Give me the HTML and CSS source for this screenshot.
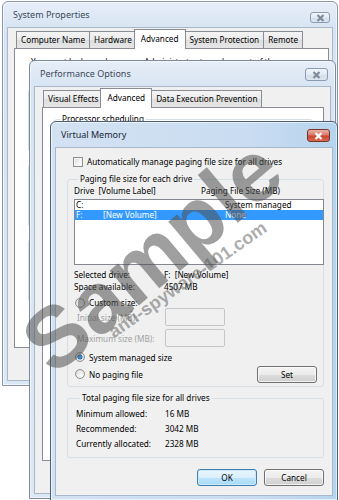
FILE: index.html
```html
<!DOCTYPE html>
<html lang="en">

<head>
    <meta charset="UTF-8">
    <meta name="viewport" content="width=device-width, initial-scale=1.0">
    <title>Virtual Memory</title>
    <link rel="stylesheet" href="styles.css">
</head>

<body>
    <div class="desktop">

        <!-- System Properties (inactive) -->
        <div class="window win-sys">
            <div class="titlebar">
                <span class="title">System Properties</span>
                <span class="close close-small">
                    <svg width="9" height="8" viewBox="0 0 9 8"><path d="M1.5 1 L7.5 7 M7.5 1 L1.5 7" /></svg>
                </span>
            </div>
            <div class="client">
                <div class="tabs">
                    <span class="tab">Computer Name</span>
                    <span class="tab">Hardware</span>
                    <span class="tab active">Advanced</span>
                    <span class="tab">System Protection</span>
                    <span class="tab">Remote</span>
                </div>
                <div class="panel panel-sys">
                    <p class="note">You must be logged on as an Administrator to make most of these changes.</p>
                    <div class="group group-sys"></div>
                    <div class="group group-sys"></div>
                    <div class="group group-sys"></div>
                </div>
            </div>
        </div>

        <!-- Performance Options (inactive) -->
        <div class="window win-perf">
            <div class="titlebar">
                <span class="title">Performance Options</span>
                <span class="close">
                    <svg width="9" height="8" viewBox="0 0 9 8"><path d="M1.5 1 L7.5 7 M7.5 1 L1.5 7" /></svg>
                </span>
            </div>
            <div class="client">
                <div class="tabs">
                    <span class="tab">Visual Effects</span>
                    <span class="tab active">Advanced</span>
                    <span class="tab">Data Execution Prevention</span>
                </div>
                <div class="panel panel-perf">
                    <fieldset class="group group-perf"><legend>Processor scheduling</legend></fieldset>
                </div>
            </div>
        </div>

        <!-- Virtual Memory (active) -->
        <div class="window win-vm">
            <div class="titlebar">
                <span class="title">Virtual Memory</span>
                <span class="close close-red">
                    <svg width="9" height="8" viewBox="0 0 9 8"><path d="M1.5 1 L7.5 7 M7.5 1 L1.5 7" /></svg>
                </span>
            </div>
            <div class="client client-vm">
                <label class="check-row">
                    <span class="checkbox"></span>
                    Automatically manage paging file size for all drives
                </label>

                <fieldset class="group group-drives">
                    <legend>Paging file size for each drive</legend>
                    <div class="list-head">
                        <span>Drive&nbsp; [Volume Label]</span>
                        <span>Paging File Size (MB)</span>
                    </div>
                    <div class="listbox">
                        <div class="list-row">
                            <span>C:</span><span></span><span>System managed</span>
                        </div>
                        <div class="list-row selected">
                            <span>F:</span><span>[New Volume]</span><span>None</span>
                        </div>
                    </div>

                    <div class="info">
                        <span>Selected drive:</span><span>F:&nbsp; [New Volume]</span>
                        <span>Space available:</span><span>4507 MB</span>
                    </div>

                    <label class="radio-row radio-custom"><span class="radio"></span>Custom size:</label>
                    <div class="size-row">
                        <span class="size-label">Initial size (MB):</span>
                        <span class="input"></span>
                    </div>
                    <div class="size-row size-max">
                        <span class="size-label">Maximum size (MB):</span>
                        <span class="input"></span>
                    </div>

                    <div class="set-row">
                        <div class="radios">
                            <label class="radio-row"><span class="radio checked"></span>System managed size</label>
                            <label class="radio-row"><span class="radio"></span>No paging file</label>
                        </div>
                        <button class="btn btn-set">Set</button>
                    </div>
                </fieldset>

                <fieldset class="group group-total">
                    <legend>Total paging file size for all drives</legend>
                    <div class="totals">
                        <span>Minimum allowed:</span><span>16 MB</span>
                        <span>Recommended:</span><span>3042 MB</span>
                        <span>Currently allocated:</span><span>2328 MB</span>
                    </div>
                </fieldset>

                <div class="buttons">
                    <button class="btn btn-default">OK</button>
                    <button class="btn">Cancel</button>
                </div>
            </div>
        </div>

        <!-- Watermark -->
        <div class="mark mark-big">Sample</div>
        <div class="mark mark-small">anti-spyware-101.com</div>
    </div>
</body>

</html>
```

FILE: styles.css
```css
* {
    margin: 0;
    padding: 0;
    box-sizing: border-box;
}

body {
    font-family: "Segoe UI", "Noto Sans", Roboto, sans-serif;
    font-size: 8.2px;
    color: #000;
    background: #fff;
    width: 339px;
    height: 500px;
    overflow: hidden;
}

.desktop {
    position: relative;
    width: 339px;
    height: 500px;
    overflow: hidden;
}

/* Windows */
.window {
    position: absolute;
    display: flex;
    flex-direction: column;
    border: 1px solid #8896a8;
    border-radius: 6px 6px 0 0;
    padding: 0 4px 4px 4px;
    background: linear-gradient(180deg, #e6eef8 0%, #d6e3f2 30px, #dce7f4 100%);
    box-shadow: 0 0 0 1px rgba(255, 255, 255, 0.6) inset;
}

.win-sys {
    left: 2px;
    top: 1px;
    width: 336px;
    height: 385px;
}

.win-perf {
    left: 29px;
    top: 60px;
    width: 307px;
    height: 439px;
    border-color: #7c899b;
}

.win-vm {
    left: 50px;
    top: 121px;
    width: 288px;
    height: 380px;
    border-color: #4d5d72;
    background: linear-gradient(90deg, #d3e2f3 0%, #c9dcf1 70%, #b5d4ee 100%);
}

.titlebar {
    height: 25px;
    display: flex;
    align-items: flex-start;
    justify-content: space-between;
    padding: 0 3px 0 6px;
}

.title {
    margin-top: 7px;
    line-height: 12px;
    font-size: 9px;
    color: #3c4858;
}

.win-vm .title {
    color: #1b2633;
}

.close {
    margin-top: 7px;
    width: 23px;
    height: 13px;
    border: 1px solid #8d9bae;
    border-radius: 3px;
    background: linear-gradient(180deg, #f1f5fa 0%, #e2eaf3 50%, #d3dee9 51%, #dce6f0 100%);
    display: flex;
    align-items: center;
    justify-content: center;
}

.close svg path {
    stroke: #7f8b9a;
    stroke-width: 2.2;
    fill: none;
}

.close-small {
    margin-top: 10px;
    width: 20px;
    height: 11px;
}

.close-red {
    border-color: #7a3326;
    background: linear-gradient(180deg, #eab2a4 0%, #d9796a 45%, #c7452f 55%, #d96a50 100%);
}

.close-red svg path {
    stroke: #fff;
}

/* Client area */
.client {
    flex: 1;
    background: #f0f0f0;
    border: 1px solid #a8b8cb;
    display: flex;
    flex-direction: column;
}

.win-sys .client {
    padding: 1px 3px 32px 6px;
}

.win-perf .client {
    padding: 1px 6px 32px 7px;
}

/* Tabs */
.tabs {
    display: flex;
    align-items: flex-end;
    height: 19px;
    padding-left: 2px;
    position: relative;
    z-index: 1;
}

.win-perf .tabs {
    padding-left: 1px;
}

.tab {
    height: 17px;
    line-height: 16px;
    padding: 0 4px;
    border: 1px solid #898c95;
    border-bottom: none;
    margin-right: -1px;
    background: linear-gradient(180deg, #f4f4f4 0%, #ebebeb 50%, #dedede 51%, #e6e6e6 100%);
    white-space: nowrap;
}

.tab.active {
    height: 20px;
    line-height: 18px;
    margin: 0 -1px -1px -2px;
    padding: 0 6px;
    background: #fff;
    position: relative;
    z-index: 2;
}

.panel {
    flex: 1;
    background: #fff;
    border: 1px solid #898c95;
}

.panel-sys {
    padding: 8px 10px 0 13px;
}

.note {
    margin-left: 3px;
    line-height: 10px;
}

.panel-perf {
    padding: 5px 10px 0 11px;
}

/* Group boxes */
.group {
    border: 1px solid #d5dfe5;
    border-radius: 3px;
    min-width: 0;
}

.group legend {
    padding: 0 2px;
    margin-left: 5px;
    line-height: 12px;
}

.group-sys {
    height: 63px;
    margin-top: 12px;
}

.group-perf {
    height: 60px;
}

.client-vm {
    padding: 7px 8px 0 11px;
}

.check-row {
    display: flex;
    align-items: center;
    gap: 4px;
    height: 13px;
    margin-left: 6px;
    margin-bottom: 5px;
}

.checkbox {
    width: 10px;
    height: 10px;
    border: 1px solid #8e8f8f;
    background: linear-gradient(135deg, #dadada 0%, #f4f4f4 60%, #fdfdfd 100%);
    box-shadow: inset 0 0 0 1px #f5f5f5;
}

.group-drives {
    padding: 0 0 3px 6px;
}

.group-drives legend,
.group-total legend {
    margin-left: 4px;
}

.list-head {
    display: grid;
    grid-template-columns: 127px 1fr;
    line-height: 12px;
    margin-bottom: 2px;
}

.listbox {
    height: 66px;
    margin-right: -1px;
    border: 1px solid #828790;
    background: #fff;
}

.list-row {
    display: grid;
    grid-template-columns: 27px 122px 1fr;
    height: 10px;
    line-height: 10px;
    padding-left: 1px;
}

.list-row.selected {
    background: #3399ff;
    color: #fff;
}

.info {
    display: grid;
    grid-template-columns: 90px 1fr;
    line-height: 11px;
    margin-top: 4px;
}

.info span:nth-child(1),
.info span:nth-child(2) {
    line-height: 12px;
}

.radio-row {
    display: flex;
    align-items: center;
    gap: 4px;
    height: 12px;
    margin-left: 1px;
}

.radio-custom {
    height: 11px;
    margin-top: 5px;
}

.radio {
    width: 10px;
    height: 10px;
    border-radius: 50%;
    border: 1px solid #8e8f8f;
    background: radial-gradient(circle at 65% 70%, #fdfdfd 0%, #e6e6e6 60%, #cfcfcf 100%);
}

.radio.checked {
    background: radial-gradient(circle at 50% 50%, #3d9be0 0%, #2f7fc4 30%, #1d5e9a 40%, #e6e6e6 48%, #d7d7d7 100%);
}

.size-row {
    display: flex;
    align-items: center;
}

.size-max {
    margin-top: 3px;
}

.size-label {
    width: 91px;
    padding-left: 3px;
    color: #a0a0a0;
}

.input {
    width: 60px;
    height: 18px;
    border: 1px solid #c3c7cb;
    border-radius: 2px;
    background: #f0f0f0;
}

.set-row {
    display: flex;
    align-items: flex-end;
    justify-content: space-between;
    margin-top: 4px;
}

.radios {
    display: flex;
    flex-direction: column;
    gap: 5px;
    margin-bottom: 3px;
}

/* Buttons */
.btn {
    font: inherit;
    color: #000;
    height: 17px;
    width: 60px;
    border: 1px solid #707070;
    border-radius: 3px;
    background: linear-gradient(180deg, #f3f3f3 0%, #ebebeb 50%, #dddddd 51%, #cfcfcf 100%);
    box-shadow: inset 0 0 0 1px rgba(255, 255, 255, 0.7);
}

.btn-set {
    margin-right: 6px;
}

.btn-default {
    border-color: #3c7fb1;
    background: linear-gradient(180deg, #eaf6fd 0%, #d9f0fc 50%, #bee6fd 51%, #a7d9f5 100%);
    box-shadow: inset 0 0 0 1px #cde8f8;
}

.group-total {
    margin-top: 5px;
    padding: 2px 0 6px 8px;
}

.totals {
    display: grid;
    grid-template-columns: 89px 1fr;
    line-height: 15px;
}

.buttons {
    display: flex;
    justify-content: flex-end;
    gap: 7px;
    margin-top: 11px;
}

/* Watermark */
.mark {
    position: absolute;
    font-family: "Liberation Sans", Arial, sans-serif;
    font-weight: bold;
    white-space: nowrap;
    transform: translate(-50%, -50%) rotate(-40deg);
    pointer-events: none;
}

.mark-big {
    left: 152px;
    top: 256px;
    font-size: 86px;
    color: rgba(80, 80, 80, 0.55);
}

.mark-small {
    left: 188px;
    top: 280px;
    font-size: 18px;
    color: rgba(90, 90, 90, 0.5);
    transform: translate(-50%, -50%) rotate(-35deg);
}
```
